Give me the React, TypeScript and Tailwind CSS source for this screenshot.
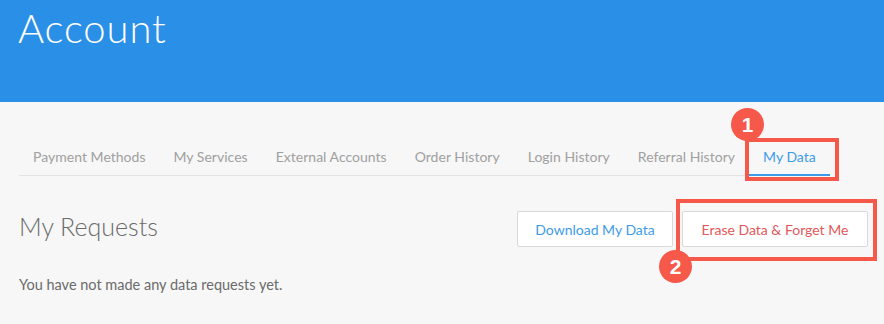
const tabs = [
  "Payment Methods",
  "My Services",
  "External Accounts",
  "Order History",
  "Login History",
  "Referral History",
  "My Data",
];

function Badge({ n, className }: { n: number; className: string }) {
  return (
    <span
      className={`absolute flex h-[33px] w-[33px] items-center justify-center rounded-full bg-[#f6584a] text-[21px] font-bold text-white ${className}`}
      style={{ fontFamily: "'Liberation Sans', Arial, sans-serif" }}
    >
      {n}
    </span>
  );
}

export default function App() {
  return (
    <div
      className="min-h-[324px] w-full bg-[#f7f7f7]"
      style={{ fontFamily: "Lato, 'Open Sans', sans-serif" }}
    >
      {/* Header */}
      <header className="h-[102px] bg-[#2a8fe7] pl-[18px] pt-[4px]">
        <h1 className="text-[40px] font-light leading-[48px] tracking-[0.9px] text-white">
          Account
        </h1>
      </header>

      <main className="pl-[19px] pr-[16px] pt-[38px]">
        {/* Tabs */}
        <ul className="flex w-fit border-b border-[#e3e3e3]">
          {tabs.map((t) => {
            const active = t === "My Data";
            return (
              <li
                key={t}
                className={`relative px-[14px] py-[7px] text-[14px] leading-[20px] tracking-[0.02px] ${
                  active ? "-mb-px border-b-2 border-[#3d9be9] text-[#3d9be9]" : "text-[#a0a0a0]"
                }`}
              >
                {t}
                {active && (
                  <>
                    <span className="absolute -bottom-[7px] -left-[4px] -right-[9px] -top-[2px] border-[4px] border-[#f6584a]" />
                    <Badge n={1} className="-left-[18px] -top-[32px]" />
                  </>
                )}
              </li>
            );
          })}
        </ul>

        {/* Requests */}
        <div className="mt-[35px] flex items-start justify-between">
          <h2 className="text-[25px] font-light leading-[30px] text-[#6b6b6b]">My Requests</h2>
          <div className="flex gap-[9px]">
            <button className="h-[36px] w-[156px] rounded-[2px] border border-[#d9d9d9] bg-white text-[14px] text-[#3d9be9]">
              Download My Data
            </button>
            <div className="relative">
              <button className="h-[36px] w-[186px] rounded-[2px] border border-[#d9d9d9] bg-white text-[14px] text-[#e2585a]">
                Erase Data &amp; Forget Me
              </button>
              <span className="absolute -bottom-[14px] -left-[6px] -right-[9px] -top-[12px] border-[4px] border-[#f6584a]" />
              <Badge n={2} className="-left-[23px] top-[39px]" />
            </div>
          </div>
        </div>

        <p className="mt-[28px] text-[14.5px] leading-[20px] text-[#6b6b6b]">
          You have not made any data requests yet.
        </p>
      </main>
    </div>
  );
}
